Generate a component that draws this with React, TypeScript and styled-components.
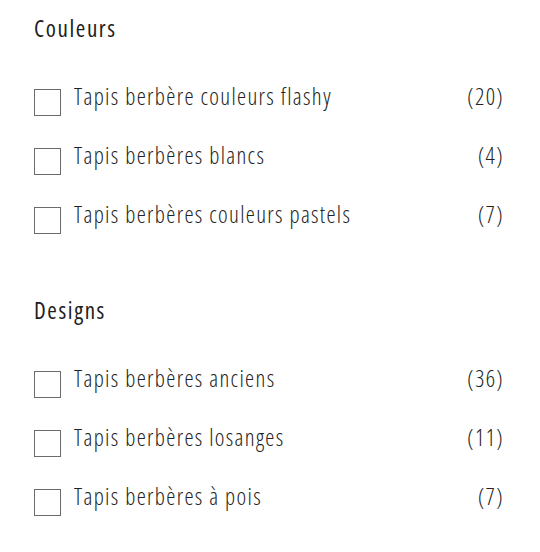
import React from "react";
import styled, { createGlobalStyle } from "styled-components";

const Global = createGlobalStyle`
  html, body { margin: 0; padding: 0; background: #fff; }
  body { font-family: "Open Sans", "Liberation Sans", sans-serif; color: #222; }
`;

const Page = styled.div`
  padding: 12px 36px 0 34px;
  display: flex;
  flex-direction: column;
  gap: 60px;
`;

const Section = styled.section`
  display: flex;
  flex-direction: column;
`;

const Title = styled.h2`
  margin: 0 0 39px 0;
  font-size: 23px;
  font-weight: 400;
  font-stretch: 75%;
  letter-spacing: 1.6px;
  color: #1e1e1e;
  line-height: 32px;
`;

const List = styled.ul`
  list-style: none;
  margin: 0;
  padding: 0;
  display: flex;
  flex-direction: column;
  gap: 26px;
`;

const Row = styled.li`
  display: flex;
  align-items: flex-start;
`;

const Box = styled.span`
  width: 27px;
  height: 27px;
  border: 1px solid #6b6b6b;
  box-sizing: border-box;
  margin-top: 6px;
  margin-right: 13px;
  flex: none;
`;

const Text = styled.span<{ $grow?: boolean }>`
  flex: ${(p) => (p.$grow ? 1 : "none")};
  font-size: 23px;
  line-height: 27px;
  font-weight: 300;
  font-stretch: 75%;
  letter-spacing: 1.35px;
  color: #222;
`;

const data = [
  {
    title: "Couleurs",
    items: [
      ["Tapis berbère couleurs flashy", "(20)"],
      ["Tapis berbères blancs", "(4)"],
      ["Tapis berbères couleurs pastels", "(7)"],
    ],
  },
  {
    title: "Designs",
    items: [
      ["Tapis berbères anciens", "(36)"],
      ["Tapis berbères losanges", "(11)"],
      ["Tapis berbères à pois", "(7)"],
    ],
  },
];

export default function App() {
  return (
    <>
      <Global />
      <Page>
        {data.map((s) => (
          <Section key={s.title}>
            <Title>{s.title}</Title>
            <List>
              {s.items.map(([l, c]) => (
                <Row key={l}>
                  <Box />
                  <Text $grow>{l}</Text>
                  <Text>{c}</Text>
                </Row>
              ))}
            </List>
          </Section>
        ))}
      </Page>
    </>
  );
}
